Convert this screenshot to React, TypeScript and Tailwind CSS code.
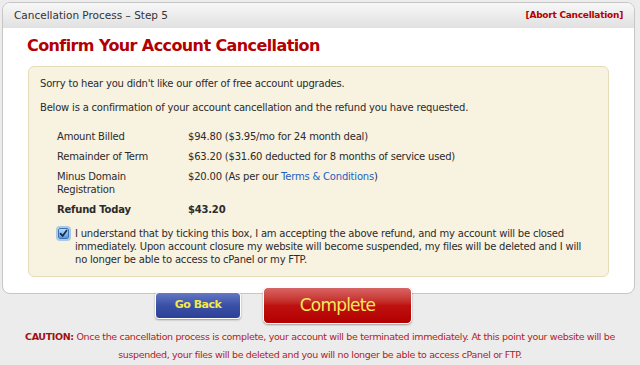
import React from 'react';

const rows = [
  { label: 'Amount Billed', value: <>$94.80 ($3.95/mo for 24 month deal)</> },
  { label: 'Remainder of Term', value: <>$63.20 ($31.60 deducted for 8 months of service used)</> },
  {
    label: <>Minus Domain<br />Registration</>,
    value: <>$20.00 (As per our <a className="text-[#1f5fc4]">Terms &amp; Conditions</a>)</>,
  },
];

function CheckBox() {
  return (
    <span className="mt-[1px] flex h-[11px] w-[11px] shrink-0 items-center justify-center rounded-[2px] border border-[#3b73b9] bg-gradient-to-b from-[#b9ddf8] to-[#4f9ae0] shadow-[0_0_0_2px_rgba(110,165,230,0.55)]">
      <svg width="9" height="9" viewBox="0 0 9 9">
        <path d="M1.5 4.6 L3.6 7 L7.6 1.4" fill="none" stroke="#1b2a4a" strokeWidth="1.7" strokeLinecap="round" strokeLinejoin="round" />
      </svg>
    </span>
  );
}

export default function App() {
  return (
    <div className="h-[365px] w-[640px] overflow-hidden bg-[#ececec] pt-[2px] font-['DejaVu_Sans',sans-serif] text-[#2b2b2b]">
      <div className="ml-[2px] w-[633px] overflow-hidden rounded-[8px] border border-[#c6c6c6] bg-white">
        <div className="flex h-[25px] items-center justify-between bg-gradient-to-b from-[#f7f7f7] to-[#e1e1e1] pl-[11px] pr-[11px]">
          <span className="text-[10.5px] text-[#333]">Cancellation Process – Step 5</span>
          <a className="text-[9px] font-bold tracking-[-0.25px] text-[#b40000]">[Abort Cancellation]</a>
        </div>
        <h1 className="pl-[24px] pt-[7px] text-[16px] leading-[22px] font-bold tracking-[-0.6px] text-[#b30000]">
          Confirm Your Account Cancellation
        </h1>
        <div className="mx-[25px] mb-[16px] mt-[9px] w-[581px] rounded-[6px] border border-[#e6dbb8] bg-[#f8f2e1] pb-[10px] pl-[11px] pt-[10px] text-[10px] leading-[13px] tracking-[-0.2px]">
          <p>Sorry to hear you didn't like our offer of free account upgrades.</p>
          <p className="mt-[11px]">Below is a confirmation of your account cancellation and the refund you have requested.</p>
          <div className="mt-[12px] pl-[17px]">
            {rows.map((r, i) => (
              <div key={i} className="flex py-[3.5px]">
                <div className="w-[131px] shrink-0">{r.label}</div>
                <div>{r.value}</div>
              </div>
            ))}
            <div className="flex py-[3.5px] font-bold">
              <div className="w-[131px] shrink-0">Refund Today</div>
              <div>$43.20</div>
            </div>
          </div>
          <div className="mt-[8px] flex gap-[6px] pl-[18px]">
            <CheckBox />
            <p>
              I understand that by ticking this box, I am accepting the above refund, and my account will be closed<br />
              immediately. Upon account closure my website will become suspended, my files will be deleted and I will<br />
              no longer be able to access to cPanel or my FTP.
            </p>
          </div>
        </div>
      </div>

      <div className="-mt-[7px] flex items-center gap-[22px] pl-[155px]">
        <button className="h-[27px] w-[86px] rounded-[4px] border border-white bg-gradient-to-b from-[#6477c4] via-[#3a50a6] to-[#2c4196] text-[11px] font-bold tracking-[-0.5px] text-[#f3e84c] shadow-[0_1px_2px_rgba(0,0,0,0.35)]">
          Go Back
        </button>
        <button className="h-[37px] w-[149px] rounded-[5px] border border-white bg-gradient-to-b from-[#d86464] via-[#bf1010] to-[#b30000] text-[17px] tracking-[-0.8px] text-[#f6e95c] shadow-[0_1px_2px_rgba(0,0,0,0.35)]">
          Complete
        </button>
      </div>

      <p className="mt-[4px] text-center text-[9.5px] leading-[18px] tracking-[-0.35px] text-[#b01c1c]">
        <b className="text-[#a01010]">CAUTION:</b> Once the cancellation process is complete, your account will be terminated immediately. At this point your website will be<br />
        suspended, your files will be deleted and you will no longer be able to access cPanel or FTP.
      </p>
    </div>
  );
}
